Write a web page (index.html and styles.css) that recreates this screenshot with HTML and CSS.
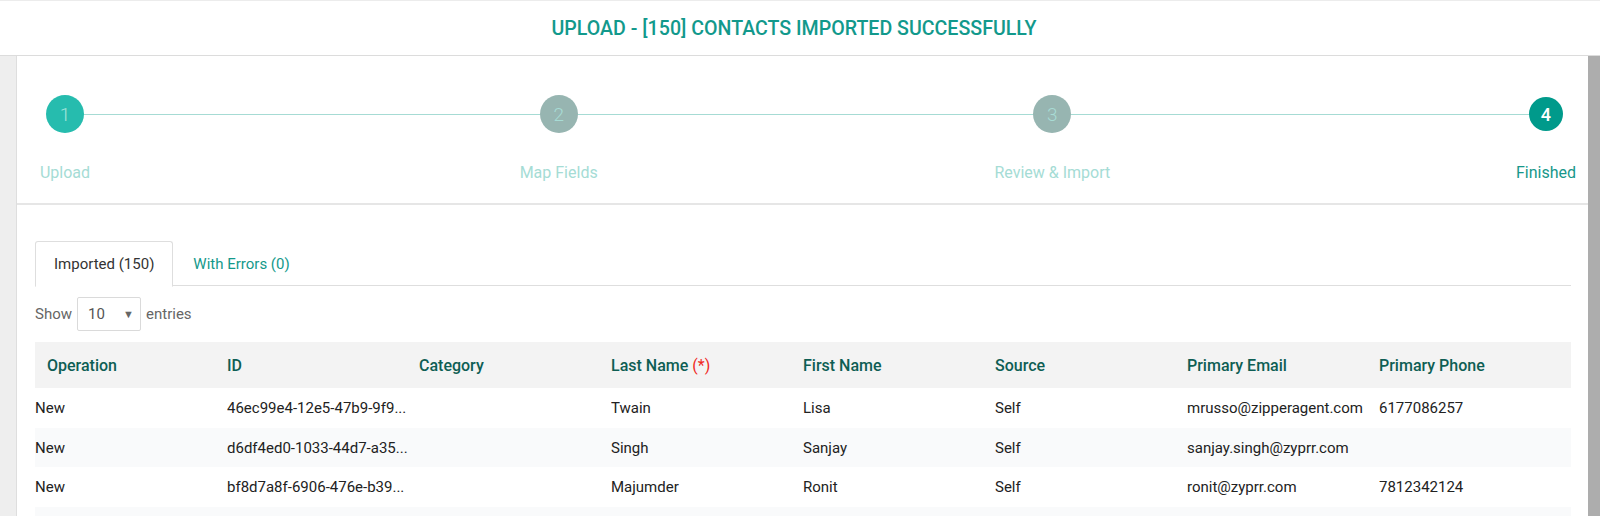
FILE: index.html
```html
<!DOCTYPE html>
<html>
<head>
<meta charset="utf-8">
<link rel="stylesheet" href="styles.css">
</head>
<body>
<header class="topbar">
  <h1 class="title">Upload - [150] Contacts Imported Successfully</h1>
</header>
<div class="main">
  <div class="gutter"></div>
  <div class="card">
    <section class="stepper">
      <div class="track">
        <div class="step done"><span class="dot">1</span><span class="label">Upload</span></div>
        <div class="step"><span class="dot">2</span><span class="label">Map Fields</span></div>
        <div class="step"><span class="dot">3</span><span class="label">Review &amp; Import</span></div>
        <div class="step current"><span class="dot">4</span><span class="label">Finished</span></div>
      </div>
    </section>
    <section class="content">
      <div class="tabs">
        <div class="tab active">Imported (150)</div>
        <div class="tab">With Errors (0)</div>
      </div>
      <div class="length">
        <span>Show</span>
        <div class="select"><span>10</span><span class="caret">&#9660;</span></div>
        <span>entries</span>
      </div>
      <table class="grid">
        <thead>
          <tr>
            <th>Operation</th><th>ID</th><th>Category</th><th>Last Name <span class="req">(*)</span></th><th>First Name</th><th>Source</th><th>Primary Email</th><th>Primary Phone</th>
          </tr>
        </thead>
        <tbody>
          <tr><td>New</td><td>46ec99e4-12e5-47b9-9f9...</td><td></td><td>Twain</td><td>Lisa</td><td>Self</td><td>mrusso@zipperagent.com</td><td>6177086257</td></tr>
          <tr><td>New</td><td>d6df4ed0-1033-44d7-a35...</td><td></td><td>Singh</td><td>Sanjay</td><td>Self</td><td>sanjay.singh@zyprr.com</td><td></td></tr>
          <tr><td>New</td><td>bf8d7a8f-6906-476e-b39...</td><td></td><td>Majumder</td><td>Ronit</td><td>Self</td><td>ronit@zyprr.com</td><td>7812342124</td></tr>
          <tr><td></td><td></td><td></td><td></td><td></td><td></td><td></td><td></td></tr>
        </tbody>
      </table>
    </section>
  </div>
  <div class="scrollbar"></div>
</div>
</body>
</html>
```
FILE: styles.css
```css
* { box-sizing: border-box; }
html, body { margin: 0; padding: 0; }
body {
  background: #eeeeee;
  font-family: Roboto, "Liberation Sans", sans-serif;
  width: 1600px;
  height: 516px;
  overflow: hidden;
}
.topbar {
  height: 56px;
  background: #fff;
  border-top: 1px solid #ececec;
  border-bottom: 1px solid #dcdcdc;
  display: flex;
  align-items: center;
  justify-content: center;
  padding-right: 12px;
}
.title {
  margin: 0;
  font-size: 19.6px;
  font-weight: 500;
  text-transform: uppercase;
  color: #12998c;
  letter-spacing: 0;
}
.main {
  display: flex;
  height: 460px;
  overflow: hidden;
}
.gutter {
  width: 17px;
  flex-shrink: 0;
  background: #eeeeee;
  border-right: 1px solid #dedede;
}
.card {
  flex: 1;
  background: #fff;
  display: flex;
  flex-direction: column;
}
.scrollbar {
  width: 12px;
  flex-shrink: 0;
  background: #adadad;
}
.stepper {
  flex-shrink: 0;
  height: 149px;
  border-bottom: 2px solid #e6e6e6;
  padding: 39px 0 0 6px;
}
.track {
  position: relative;
  display: flex;
  justify-content: space-between;
}
.track::before {
  content: "";
  position: absolute;
  left: 42px;
  right: 40px;
  top: 19px;
  height: 1px;
  background: #a6dbd4;
}
.step {
  position: relative;
  width: 84px;
  display: flex;
  flex-direction: column;
  align-items: center;
}
.dot {
  width: 38px;
  height: 38px;
  border-radius: 50%;
  background: #97b5b1;
  color: #a8dcd5;
  font-size: 19px;
  font-weight: 300;
  display: flex;
  align-items: center;
  justify-content: center;
}
.step.done .dot {
  background: #26bcae;
  color: #a3e3db;
}
.step.current .dot {
  width: 34px;
  height: 34px;
  margin: 2px 0;
  background: #009a8b;
  color: #fff;
  font-size: 18px;
  font-weight: 500;
}
.label {
  margin-top: 30px;
  white-space: nowrap;
  font-size: 16px;
  color: #a5dcd5;
}
.step.current .label { color: #17978a; }
.content {
  flex-shrink: 0;
  padding: 36px 17px 0 18px;
}
.tabs {
  display: flex;
  border-bottom: 1px solid #dedede;
  height: 45px;
}
.tab {
  padding: 0 19px 0 18px;
  height: 45px;
  display: flex;
  align-items: center;
  font-size: 15px;
  color: #14998b;
  margin-right: 2px;
}
.tab.active {
  color: #333;
  border: 1px solid #dedede;
  border-bottom: 1px solid #fff;
  border-radius: 3px 3px 0 0;
  height: 46px;
  background: #fff;
  padding: 0 18px;
}
.length {
  display: flex;
  align-items: center;
  gap: 5px;
  margin-top: 11px;
  font-size: 15px;
  color: #666;
}
.select {
  width: 64px;
  height: 34px;
  border: 1px solid #dadada;
  border-radius: 2px;
  display: flex;
  align-items: center;
  justify-content: space-between;
  padding: 0 6px 0 10px;
  color: #555;
  font-size: 15px;
}
.caret { font-size: 11px; color: #666; }
.grid {
  margin-top: 11px;
  width: 1536px;
  border-collapse: collapse;
  table-layout: fixed;
}
.grid th, .grid td {
  width: 192px;
  text-align: left;
  padding: 0;
  white-space: nowrap;
  overflow: hidden;
}
.grid th {
  height: 46px;
  background: #f3f3f3;
  color: #0e5e54;
  font-weight: 500;
  font-size: 16px;
}
.grid th:first-child { padding-left: 12px; }
.req { color: #f0281e; font-weight: 400; }
.grid td {
  height: 39.7px;
  font-size: 15px;
  color: #222;
}
.grid tbody tr:nth-child(even) td { background: #f9fafb; }
```
